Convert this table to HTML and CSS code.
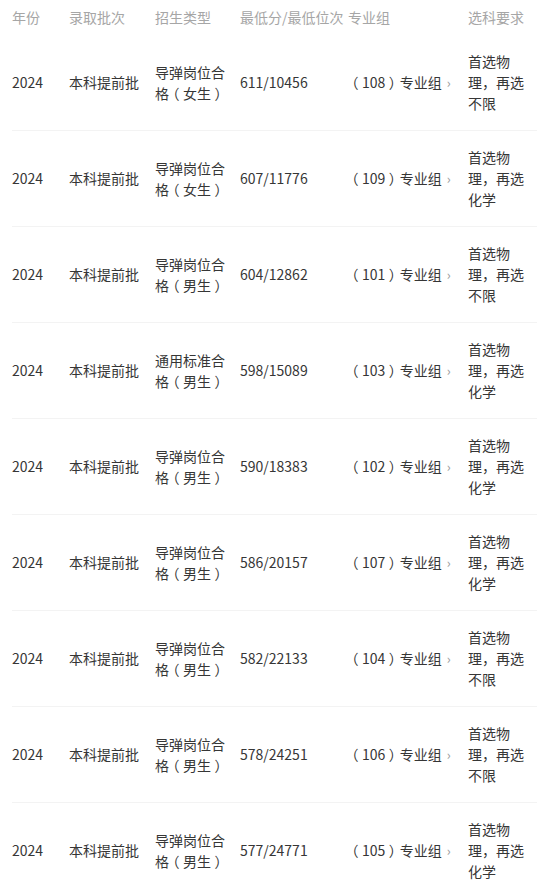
FILE: index.html
```html
<!DOCTYPE html>
<html lang="zh-CN">
<head>
<meta charset="utf-8">
<link rel="stylesheet" href="styles.css">
</head>
<body>
<div class="wrap">
<table class="tbl">
<colgroup>
<col class="c1"><col class="c2"><col class="c3"><col class="c4"><col class="c5"><col class="c6">
</colgroup>
<thead>
<tr><th>年份</th><th>录取批次</th><th>招生类型</th><th class="nowrap">最低分/最低位次</th><th>专业组</th><th>选科要求</th></tr>
</thead>
<tbody>
<tr><td>2024</td><td>本科提前批</td><td class="type">导弹岗位合<br>格<span class="p">（</span>女生<span class="p">）</span></td><td>611/10456</td><td class="grp"><span class="p">（</span>108<span class="p">）</span>专业组<span class="chev">›</span></td><td class="req">首选物理，再选不限</td></tr>
<tr><td>2024</td><td>本科提前批</td><td class="type">导弹岗位合<br>格<span class="p">（</span>女生<span class="p">）</span></td><td>607/11776</td><td class="grp"><span class="p">（</span>109<span class="p">）</span>专业组<span class="chev">›</span></td><td class="req">首选物理，再选化学</td></tr>
<tr><td>2024</td><td>本科提前批</td><td class="type">导弹岗位合<br>格<span class="p">（</span>男生<span class="p">）</span></td><td>604/12862</td><td class="grp"><span class="p">（</span>101<span class="p">）</span>专业组<span class="chev">›</span></td><td class="req">首选物理，再选不限</td></tr>
<tr><td>2024</td><td>本科提前批</td><td class="type">通用标准合<br>格<span class="p">（</span>男生<span class="p">）</span></td><td>598/15089</td><td class="grp"><span class="p">（</span>103<span class="p">）</span>专业组<span class="chev">›</span></td><td class="req">首选物理，再选化学</td></tr>
<tr><td>2024</td><td>本科提前批</td><td class="type">导弹岗位合<br>格<span class="p">（</span>男生<span class="p">）</span></td><td>590/18383</td><td class="grp"><span class="p">（</span>102<span class="p">）</span>专业组<span class="chev">›</span></td><td class="req">首选物理，再选化学</td></tr>
<tr><td>2024</td><td>本科提前批</td><td class="type">导弹岗位合<br>格<span class="p">（</span>男生<span class="p">）</span></td><td>586/20157</td><td class="grp"><span class="p">（</span>107<span class="p">）</span>专业组<span class="chev">›</span></td><td class="req">首选物理，再选化学</td></tr>
<tr><td>2024</td><td>本科提前批</td><td class="type">导弹岗位合<br>格<span class="p">（</span>男生<span class="p">）</span></td><td>582/22133</td><td class="grp"><span class="p">（</span>104<span class="p">）</span>专业组<span class="chev">›</span></td><td class="req">首选物理，再选不限</td></tr>
<tr><td>2024</td><td>本科提前批</td><td class="type">导弹岗位合<br>格<span class="p">（</span>男生<span class="p">）</span></td><td>578/24251</td><td class="grp"><span class="p">（</span>106<span class="p">）</span>专业组<span class="chev">›</span></td><td class="req">首选物理，再选不限</td></tr>
<tr><td>2024</td><td>本科提前批</td><td class="type">导弹岗位合<br>格<span class="p">（</span>男生<span class="p">）</span></td><td>577/24771</td><td class="grp"><span class="p">（</span>105<span class="p">）</span>专业组<span class="chev">›</span></td><td class="req">首选物理，再选化学</td></tr>
</tbody>
</table>
</div>
</body>
</html>
```

FILE: styles.css
```css
html, body {
  margin: 0;
  padding: 0;
  background: #ffffff;
}
body {
  font-family: "Noto Sans CJK SC", "Noto Sans", sans-serif;
  font-size: 14px;
  color: #363636;
}
.wrap {
  padding-left: 12px;
  overflow: hidden;
}
.tbl {
  width: 525px;
  table-layout: fixed;
  border-collapse: collapse;
}
.c1 { width: 57px; }
.c2 { width: 86px; }
.c3 { width: 85px; }
.c4 { width: 108px; }
.c5 { width: 120px; }
.c6 { width: 69px; }
.tbl th {
  height: 35px;
  padding: 0;
  font-weight: normal;
  color: #a6a6a6;
  text-align: left;
  vertical-align: middle;
  line-height: 21px;
  white-space: nowrap;
}
.tbl td {
  height: 95px;
  padding: 0;
  text-align: left;
  vertical-align: middle;
  line-height: 21px;
  border-bottom: 1px solid #f3f3f3;
}
.tbl td.type { padding-right: 10px; white-space: nowrap; }
.tbl td.req { padding-right: 8px; }
.tbl td.grp { white-space: nowrap; }
.p {
  font-feature-settings: "halt";
  padding: 0 3.5px;
}
.grp .p:nth-child(2) {
  padding-right: 4px;
}
.chev {
  color: #9a9a9a;
  font-size: 13px;
  margin-left: 5px;
}
```
